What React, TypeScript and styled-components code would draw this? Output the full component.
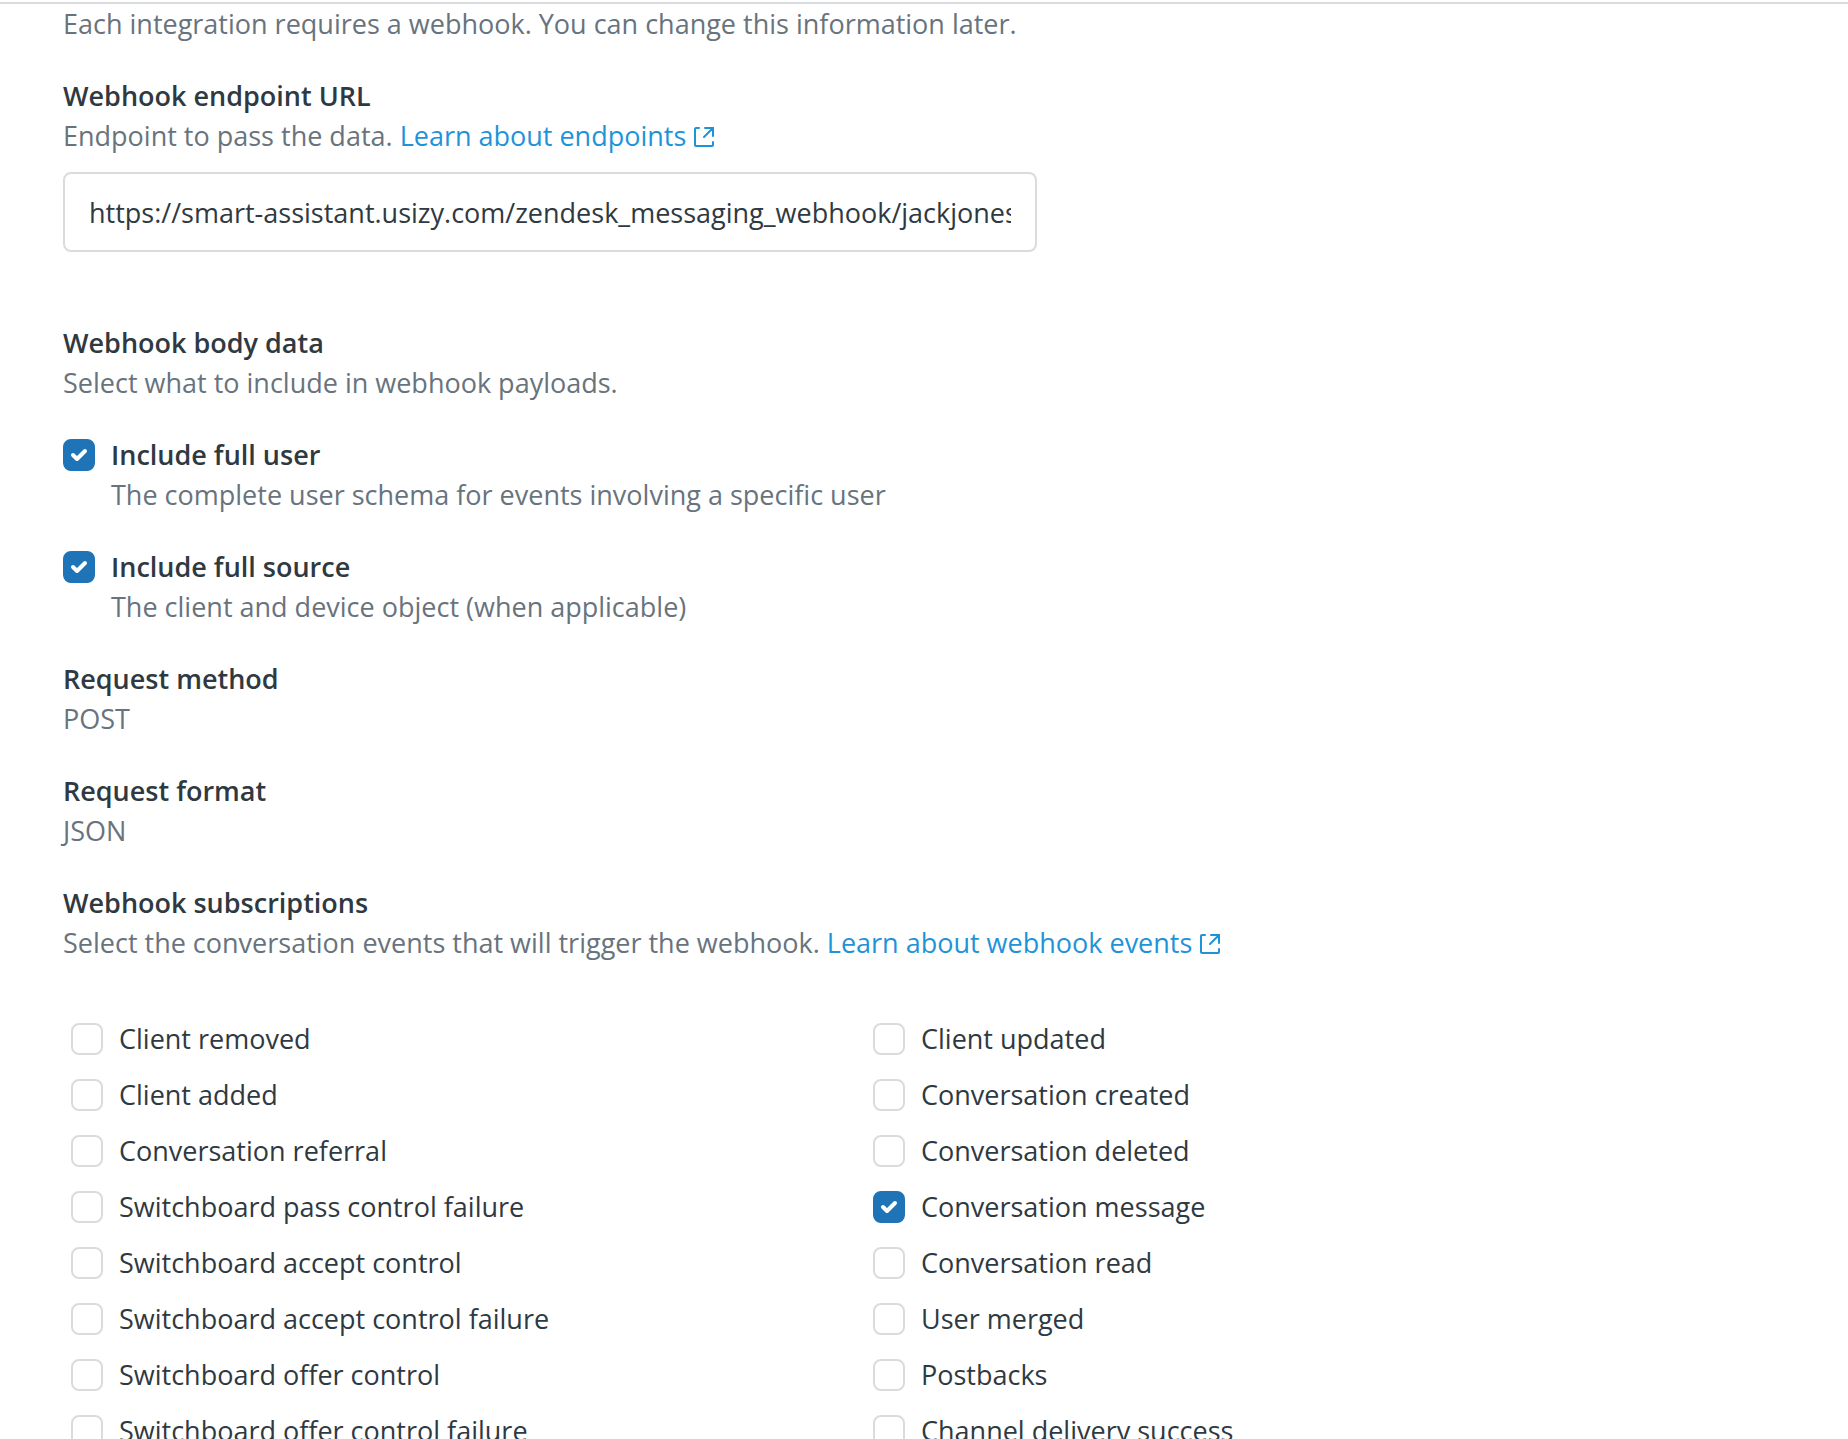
import { useId, useState } from "react";
import styled, { createGlobalStyle } from "styled-components";

const color = {
  text: "#2f3941",
  muted: "#68737d",
  border: "#d8dcde",
  link: "#1f93d8",
  primary: "#1f73b7",
};

const GlobalStyle = createGlobalStyle`
  * { box-sizing: border-box; }
  body {
    margin: 0;
    background: #fff;
    color: ${color.text};
    font: 400 27px/40px "Open Sans", "Noto Sans", sans-serif;
  }
`;

const Panel = styled.main`
  display: flex;
  flex-direction: column;
  height: 100vh;
  padding-top: 2px;
`;

const Content = styled.form`
  flex: 1;
  min-height: 0;
  overflow-y: auto;
  scrollbar-width: none;
  border-top: 2px solid ${color.border};
  padding: 0 63px 64px;
`;

const Section = styled.section`
  display: flex;
  flex-direction: column;
  margin-bottom: 32px;
`;

const UrlSection = styled(Section)`
  margin-bottom: 71px;
`;

const Intro = styled.p`
  margin: 0 0 32px;
  color: ${color.muted};
`;

const Heading = styled.h2`
  margin: 0;
  font-size: 27px;
  line-height: 40px;
  font-weight: 600;
`;

const Hint = styled.p`
  margin: 0;
  color: ${color.muted};
`;

const Link = styled.a`
  color: ${color.link};
  text-decoration: none;
  &:hover { text-decoration: underline; }
`;

const LinkIcon = styled.svg`
  width: 24px;
  height: 24px;
  margin-left: 6px;
  vertical-align: -3px;
`;

const UrlInput = styled.input`
  width: 100%;
  max-width: 974px;
  height: 80px;
  margin-top: 16px;
  padding: 0 24px;
  border: 2px solid ${color.border};
  border-radius: 8px;
  background: #fff;
  color: inherit;
  font: inherit;
`;

const CheckRow = styled.div`
  display: grid;
  grid-template-columns: 32px 1fr;
  column-gap: 16px;
  align-items: center;
`;

const IncludeRow = styled(CheckRow)`
  margin-bottom: 32px;
`;

const Box = styled.input`
  appearance: none;
  width: 32px;
  height: 32px;
  margin: 0;
  border: 2px solid ${color.border};
  border-radius: 8px;
  background: #fff;
  grid-area: 1 / 1;
  &:checked {
    border-color: ${color.primary};
    background: ${color.primary};
  }
`;

const Tick = styled.svg`
  grid-area: 1 / 1;
  width: 24px;
  height: 24px;
  justify-self: center;
  pointer-events: none;
`;

const Label = styled.label<{ $strong?: boolean }>`
  font-weight: ${(p) => (p.$strong ? 600 : 400)};
`;

const RowHint = styled(Hint)`
  grid-column: 2;
`;

const Events = styled.div`
  display: grid;
  grid-template-columns: 1fr 1fr;
  max-width: 1604px;
  margin-top: 56px;
`;

const EventColumn = styled.div`
  display: flex;
  flex-direction: column;
  gap: 16px;
  padding-left: 8px;
`;

function ExternalLink({ href, children }: { href: string; children: string }) {
  return (
    <Link href={href}>
      {children}
      <LinkIcon viewBox="0 0 12 12" fill="none" stroke="currentColor" strokeLinecap="round" aria-hidden="true">
        <path d="M10.5 8.5V10c0 .3-.2.5-.5.5H2c-.3 0-.5-.2-.5-.5V2c0-.3.2-.5.5-.5h1.5M6 6l4-4M6.5 1.5h4v4" />
      </LinkIcon>
    </Link>
  );
}

interface CheckProps {
  label: string;
  hint?: string;
  initial?: boolean;
}

function Check({ label, hint, initial = false }: CheckProps) {
  const id = useId();
  const [checked, setChecked] = useState(initial);
  const Row = hint ? IncludeRow : CheckRow;
  return (
    <Row>
      <Box id={id} type="checkbox" checked={checked} onChange={(e) => setChecked(e.target.checked)} />
      {checked && (
        <Tick viewBox="0 0 12 12" fill="none" stroke="#fff" strokeWidth="2" strokeLinecap="round" strokeLinejoin="round" aria-hidden="true">
          <path d="M3 6l2 2 4-4" />
        </Tick>
      )}
      <Label htmlFor={id} $strong={!!hint}>{label}</Label>
      {hint && <RowHint>{hint}</RowHint>}
    </Row>
  );
}

const leftEvents = [
  "Client removed",
  "Client added",
  "Conversation referral",
  "Switchboard pass control failure",
  "Switchboard accept control",
  "Switchboard accept control failure",
  "Switchboard offer control",
  "Switchboard offer control failure",
];

const rightEvents = [
  "Client updated",
  "Conversation created",
  "Conversation deleted",
  "Conversation message",
  "Conversation read",
  "User merged",
  "Postbacks",
  "Channel delivery success",
];

export default function App() {
  const [url, setUrl] = useState("https://smart-assistant.usizy.com/zendesk_messaging_webhook/jackjones");
  return (
    <>
      <GlobalStyle />
      <Panel>
        <Content>
          <Intro>Each integration requires a webhook. You can change this information later.</Intro>
          <UrlSection>
            <Heading as="label" htmlFor="endpoint-url">Webhook endpoint URL</Heading>
            <Hint>
              Endpoint to pass the data. <ExternalLink href="#endpoints">Learn about endpoints</ExternalLink>
            </Hint>
            <UrlInput id="endpoint-url" type="text" value={url} onChange={(e) => setUrl(e.target.value)} />
          </UrlSection>
          <Section>
            <Heading>Webhook body data</Heading>
            <Hint>Select what to include in webhook payloads.</Hint>
          </Section>
          <Check label="Include full user" hint="The complete user schema for events involving a specific user" initial />
          <Check label="Include full source" hint="The client and device object (when applicable)" initial />
          <Section>
            <Heading>Request method</Heading>
            <Hint>POST</Hint>
          </Section>
          <Section>
            <Heading>Request format</Heading>
            <Hint>JSON</Hint>
          </Section>
          <Section>
            <Heading>Webhook subscriptions</Heading>
            <Hint>
              Select the conversation events that will trigger the webhook.{" "}
              <ExternalLink href="#events">Learn about webhook events</ExternalLink>
            </Hint>
            <Events>
              {[leftEvents, rightEvents].map((events) => (
                <EventColumn key={events[0]}>
                  {events.map((name) => (
                    <Check key={name} label={name} initial={name === "Conversation message"} />
                  ))}
                </EventColumn>
              ))}
            </Events>
          </Section>
        </Content>
      </Panel>
    </>
  );
}
